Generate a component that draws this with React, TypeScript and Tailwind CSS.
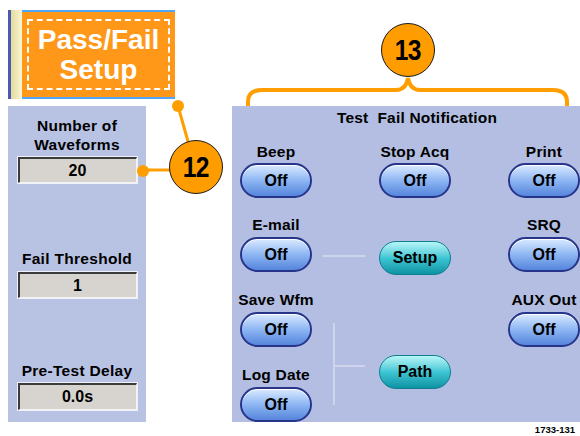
import type { ReactNode } from 'react'

const FONT = { fontFamily: '"Liberation Sans", Arial, sans-serif' }

function OffButton({ label = 'Off', className = '' }: { label?: string; className?: string }) {
  return (
    <div
      className={`w-[72px] h-[35px] rounded-full border-2 border-[#26358a] bg-gradient-to-b from-[#dbeaff] via-[#8db6f3] to-[#5685db] flex items-center justify-center text-[16px] font-bold text-black shadow-[inset_0_1px_0_#ffffff] ${className}`}
    >
      {label}
    </div>
  )
}

function TealButton({ label, className = '' }: { label: string; className?: string }) {
  return (
    <div
      className={`w-[72px] h-[34px] rounded-full border border-[#0f7f8c] bg-gradient-to-b from-[#b5f6f8] via-[#3cc6d4] to-[#0a93a4] flex items-center justify-center text-[16px] font-bold text-black ${className}`}
    >
      {label}
    </div>
  )
}

function Label({ children, className = '' }: { children: ReactNode; className?: string }) {
  return (
    <div className={`h-[18px] leading-[18px] text-[15.5px] font-bold text-black whitespace-nowrap tracking-[0.2px] ${className}`}>
      {children}
    </div>
  )
}

function ValueBox({ value, className = '' }: { value: string; className?: string }) {
  return (
    <div className={`mx-auto w-[121px] h-[28px] border border-[#eef1fb] ${className}`}>
      <div className="w-full h-full border-t-2 border-l-2 border-t-[#3b3b3b] border-l-[#3b3b3b] border-r border-b border-r-[#f4f4f4] border-b-[#f4f4f4] bg-[#d7d4cf] flex items-center justify-center text-[16px] font-bold text-black">
        {value}
      </div>
    </div>
  )
}

function Callout({ n }: { n: string }) {
  return (
    <div className="w-[54px] h-[54px] rounded-full bg-[#ff9c00] border-[1.5px] border-[#1a1a1a] flex items-center justify-center text-[30px] font-bold text-black leading-none">
      <span className="scale-x-[0.82] tracking-[-1px]">{n}</span>
    </div>
  )
}

export default function App() {
  return (
    <div className="relative w-[580px] h-[436px] bg-white overflow-hidden flex pl-[8px]" style={FONT}>
      {/* Left column */}
      <div className="w-[167px] pt-[10px] flex flex-col">
        <div className="h-[89px] flex">
          <div className="w-[3px] bg-[#4a5ab2]" />
          <div className="w-[11px] bg-gradient-to-r from-[#e4dc98] to-[#f8f4d6]" />
          <div className="flex-1 border-t-2 border-b-2 border-[#4ea6f4] bg-[#ff9719] px-[5px] py-[7px]">
            <div className="h-full border-2 border-dashed border-white flex flex-col items-center justify-center text-white font-bold text-[28px] leading-[30px]">
              <span>Pass/Fail</span>
              <span>Setup</span>
            </div>
          </div>
        </div>

        <div className="mt-[7px] w-[138px] h-[316px] bg-[#b8c3e4] flex flex-col items-center pt-[10px] text-center">
          <div className="text-[15.5px] font-bold leading-[19px] tracking-[0.3px]">Number of</div>
          <div className="text-[15.5px] font-bold leading-[19px] tracking-[0.3px]">Waveforms</div>
          <ValueBox value="20" className="mt-[2px]" />
          <div className="mt-[65px] text-[15.5px] font-bold leading-[19px] tracking-[0.3px]">Fail Threshold</div>
          <ValueBox value="1" className="mt-[3px]" />
          <div className="mt-[62px] text-[15.5px] font-bold leading-[19px] tracking-[0.3px]">Pre-Test Delay</div>
          <ValueBox value="0.0s" className="mt-[2px] h-[29px]" />
        </div>
      </div>

      {/* Right column */}
      <div className="ml-[57px] w-[348px] flex flex-col">
        <div className="h-[106px] flex flex-col">
          <div className="ml-[149px] mt-[23px]">
            <Callout n="13" />
          </div>
          <svg width="348" height="29" viewBox="0 0 348 29" className="block">
            <path
              d="M16,29 L16,25 Q16,13 30,13 L164,13 Q174,13 176,1 Q178,13 188,13 L321,13 Q335,13 335,25 L335,29"
              fill="none"
              stroke="#ff9e00"
              strokeWidth="4"
            />
          </svg>
        </div>

        <div className="relative h-[316px] bg-[#b3bee2] flex flex-col">
          <svg className="absolute inset-0 pointer-events-none" width="348" height="316">
            <line x1="91" y1="150" x2="133" y2="150" stroke="#d6dbee" strokeWidth="1.5" />
            <line x1="102" y1="217" x2="102" y2="299" stroke="#d6dbee" strokeWidth="1.5" />
            <line x1="102" y1="260" x2="133" y2="260" stroke="#d6dbee" strokeWidth="1.5" />
          </svg>
          <div className="pt-[3px] pl-[22px] text-center">
            <Label>Test&nbsp; Fail Notification</Label>
          </div>
          <div className="mt-[16px] flex">
            <div className="ml-[8px] w-[72px] flex flex-col items-center">
              <Label>Beep</Label>
              <OffButton className="mt-[2px]" />
              <Label className="mt-[18px]">E-mail</Label>
              <OffButton className="mt-[3px]" />
              <Label className="mt-[19px]">Save Wfm</Label>
              <OffButton className="mt-[3px]" />
              <Label className="mt-[19px]">Log Date</Label>
              <OffButton className="mt-[3px] h-[34px]" />
            </div>
            <div className="ml-[67px] w-[72px] flex flex-col items-center">
              <Label>Stop Acq</Label>
              <OffButton className="mt-[2px]" />
              <TealButton label="Setup" className="mt-[43px] h-[33px]" />
              <TealButton label="Path" className="mt-[80px]" />
            </div>
            <div className="ml-[57px] w-[72px] flex flex-col items-center">
              <Label>Print</Label>
              <OffButton className="mt-[2px]" />
              <Label className="mt-[18px]">SRQ</Label>
              <OffButton className="mt-[3px]" />
              <Label className="mt-[19px]">AUX Out</Label>
              <OffButton className="mt-[3px]" />
            </div>
          </div>
        </div>
        <div className="mt-[2px] pr-[5px] text-right text-[9.5px] font-bold leading-[12px] text-black">1733-131</div>
      </div>

      {/* Callout 12 */}
      <svg className="absolute inset-0 pointer-events-none" width="580" height="436">
        <line x1="178" y1="106" x2="189" y2="145" stroke="#ff9e00" strokeWidth="3" />
        <circle cx="178" cy="106" r="6" fill="#ff9e00" />
        <line x1="143" y1="170" x2="172" y2="170" stroke="#ff9e00" strokeWidth="3" />
        <circle cx="143" cy="171" r="6" fill="#ff9e00" />
      </svg>
      <div className="absolute left-[169px] top-[140px]">
        <Callout n="12" />
      </div>
    </div>
  )
}
